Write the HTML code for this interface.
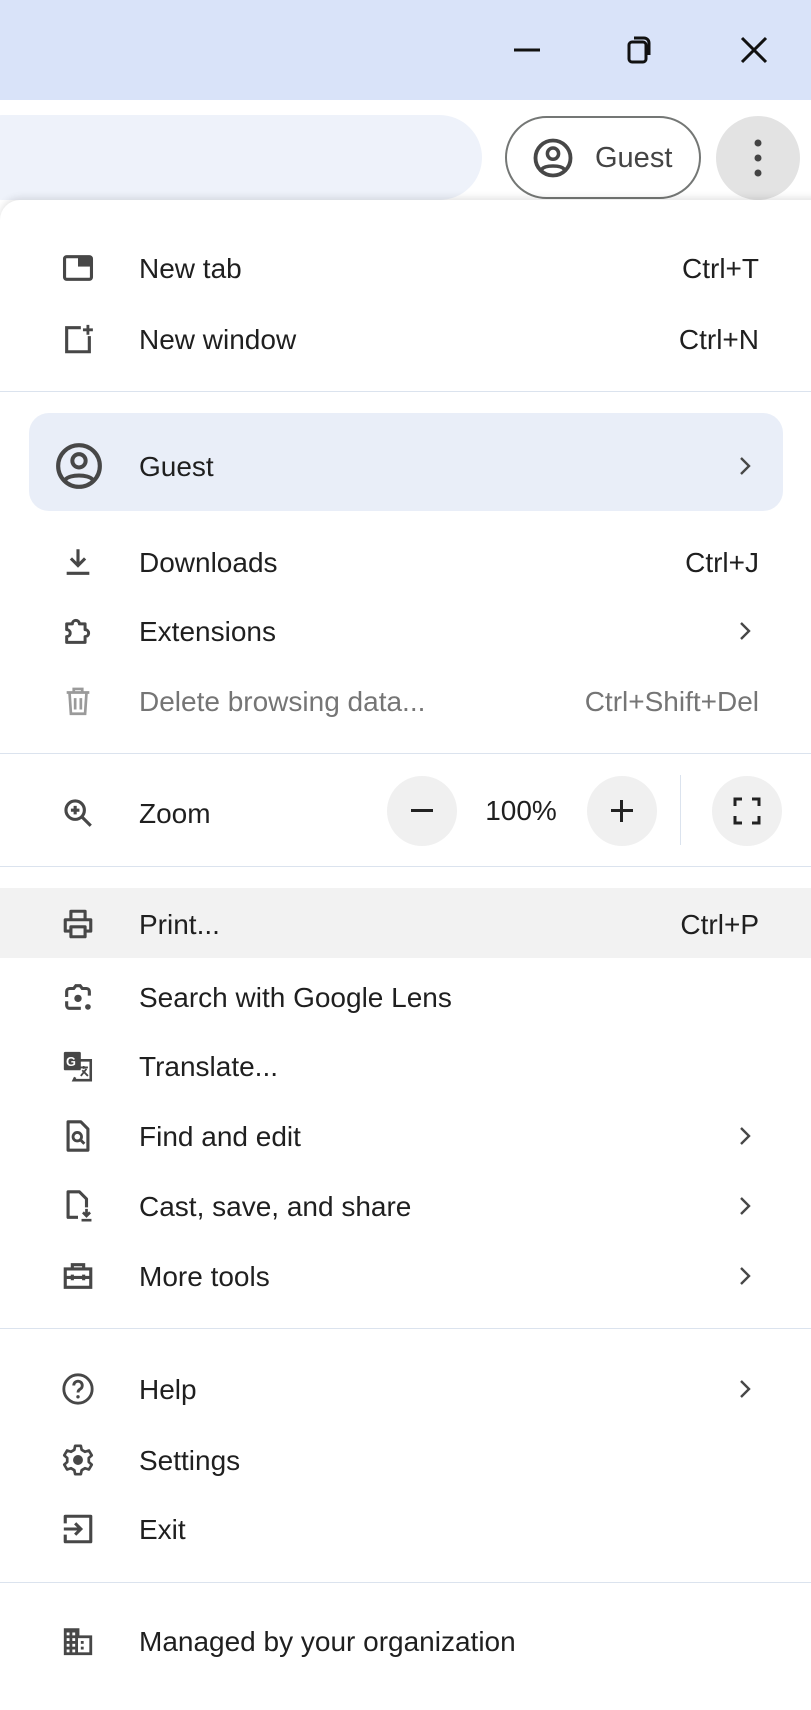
<!DOCTYPE html><html><head><style>
*{margin:0;padding:0;box-sizing:border-box}
body{width:811px;height:1704px;background:#fff;position:relative;overflow:hidden;font-family:"Liberation Sans",sans-serif;color:#1f1f1f}
.abs{position:absolute}
.row{position:absolute;left:0;width:811px;height:70px;line-height:72px;font-size:28px}
.row .t{position:absolute;left:139px;top:0}
.row .k{position:absolute;right:52px;top:0}
.row svg.i{position:absolute;left:61px;top:18px;width:34px;height:34px}
.row svg.c{position:absolute;left:734px;top:23px;width:22px;height:24px}
.div{position:absolute;left:0;width:811px;height:1px;background:#dbe3ee}
</style></head><body>
<div class="abs" style="left:0;top:0;width:811px;height:100px;background:#d9e3f9"></div>
<svg class="abs" style="left:500px;top:28px" width="290" height="44" viewBox="0 0 290 44">
<path d="M14 22h26" stroke="#111" stroke-width="3"/>
<rect x="129" y="14" width="17" height="20" rx="3" fill="none" stroke="#111" stroke-width="3"/>
<path d="M134 10h10a5 5 0 0 1 5 5v12" fill="none" stroke="#111" stroke-width="3"/>
<path d="M242 10l24 24M266 10l-24 24" stroke="#111" stroke-width="3"/>
</svg>
<div class="abs" style="left:0;top:100px;width:811px;height:110px;background:#fff;border-top-right-radius:20px"></div>
<div class="abs" style="left:-40px;top:115px;width:522px;height:85px;background:#eef2fa;border-radius:43px"></div>
<div class="abs" style="left:505px;top:116px;width:196px;height:83px;border:2px solid #747775;border-radius:42px;background:#fff"></div>
<svg class="abs" style="left:532px;top:137px" width="42" height="42" viewBox="0 0 24 24"><circle cx="12" cy="12" r="10" fill="none" stroke="#474747" stroke-width="2.2"/><circle cx="12" cy="9.5" r="3.2" fill="none" stroke="#474747" stroke-width="2"/><path d="M5.5 18.5c2-2.6 11-2.6 13 0" fill="none" stroke="#474747" stroke-width="2"/></svg>
<div class="abs" style="left:595px;top:140px;font-size:29px;line-height:36px;color:#444">Guest</div>
<div class="abs" style="left:716px;top:116px;width:84px;height:84px;border-radius:50%;background:#e3e3e3"></div>
<svg class="abs" style="left:748px;top:136px" width="20" height="44"><circle cx="10" cy="7" r="3.5" fill="#444"/><circle cx="10" cy="22" r="3.5" fill="#444"/><circle cx="10" cy="37" r="3.5" fill="#444"/></svg>
<div class="abs" style="left:0;top:200px;width:830px;height:1510px;background:#fff;border-top-left-radius:20px;box-shadow:0 -2px 8px rgba(0,0,0,.12)"></div>

<div class="row" style="top:233px"><svg class="i" viewBox="0 0 24 24"><rect x="2.5" y="4" width="19" height="16" rx="1.5" fill="none" stroke="#474747" stroke-width="2.2"/><rect x="12" y="4" width="9.5" height="7" fill="#474747"/></svg><span class="t">New tab</span><span class="k">Ctrl+T</span></div>
<div class="row" style="top:304px"><svg class="i" viewBox="0 0 24 24"><path d="M14 4H4v17h16V10" fill="none" stroke="#474747" stroke-width="2.2"/><path d="M19 2v7M15.5 5.5h7" stroke="#474747" stroke-width="2"/></svg><span class="t">New window</span><span class="k">Ctrl+N</span></div>
<div class="div" style="top:391px"></div>
<div class="abs" style="left:29px;top:413px;width:754px;height:98px;background:#e9eef8;border-radius:20px"></div>
<div class="row" style="top:431px"><svg class="i" style="left:54px;top:10px;width:50px;height:50px" viewBox="0 0 24 24"><circle cx="12" cy="12" r="10" fill="none" stroke="#474747" stroke-width="2"/><circle cx="12" cy="9.5" r="3.2" fill="none" stroke="#474747" stroke-width="1.9"/><path d="M5.5 18.5c2-2.6 11-2.6 13 0" fill="none" stroke="#474747" stroke-width="1.9"/></svg><span class="t">Guest</span><svg class="c" viewBox="0 0 22 24"><path d="M7 4l8 8-8 8" fill="none" stroke="#474747" stroke-width="2.4"/></svg></div>
<div class="row" style="top:527px"><svg class="i" viewBox="0 0 24 24"><path d="M12 3v11M7 9.5l5 5 5-5M4 20h16" fill="none" stroke="#474747" stroke-width="2.2"/></svg><span class="t">Downloads</span><span class="k">Ctrl+J</span></div>
<div class="row" style="top:596px"><svg class="i" viewBox="0 0 24 24"><path d="M4 7h4a2.5 2.5 0 0 1 5 0h4v4a2.5 2.5 0 0 1 0 5v4H4v-4a2.5 2.5 0 0 0 0-5z" fill="none" stroke="#474747" stroke-width="2.1" stroke-linejoin="round"/></svg><span class="t">Extensions</span><svg class="c" viewBox="0 0 22 24"><path d="M7 4l8 8-8 8" fill="none" stroke="#474747" stroke-width="2.4"/></svg></div>
<div class="row" style="top:666px;color:#757575"><svg class="i" viewBox="0 0 24 24"><path d="M4 6h16M9 6V3.5h6V6M6 6l1 15h10l1-15M10 10v8M14 10v8" fill="none" stroke="#9a9a9a" stroke-width="1.9"/></svg><span class="t">Delete browsing data...</span><span class="k">Ctrl+Shift+Del</span></div>
<div class="div" style="top:753px"></div>
<div class="row" style="top:778px"><svg class="i" viewBox="0 0 24 24"><circle cx="10" cy="10" r="6.5" fill="none" stroke="#474747" stroke-width="2.2"/><path d="M15 15l6 6M10 7v6M7 10h6" stroke="#474747" stroke-width="2.2"/></svg><span class="t">Zoom</span></div>
<div class="abs" style="left:387px;top:776px;width:70px;height:70px;border-radius:50%;background:#f0f0f0"></div>
<div class="abs" style="left:411px;top:809px;width:22px;height:3px;background:#222"></div>
<div class="abs" style="left:470px;top:776px;width:102px;line-height:70px;text-align:center;font-size:28px">100%</div>
<div class="abs" style="left:587px;top:776px;width:70px;height:70px;border-radius:50%;background:#f0f0f0"></div>
<div class="abs" style="left:611px;top:809px;width:22px;height:3px;background:#222"></div>
<div class="abs" style="left:620px;top:800px;width:3px;height:22px;background:#222"></div>
<div class="abs" style="left:680px;top:775px;width:1px;height:70px;background:#dbe3ee"></div>
<div class="abs" style="left:712px;top:776px;width:70px;height:70px;border-radius:50%;background:#f0f0f0"></div>
<svg class="abs" style="left:733px;top:797px" width="28" height="28" viewBox="0 0 28 28"><path d="M2 9V2h7M19 2h7v7M26 19v7h-7M9 26H2v-7" fill="none" stroke="#222" stroke-width="3"/></svg>
<div class="div" style="top:866px"></div>
<div class="abs" style="left:0;top:888px;width:811px;height:70px;background:#f2f2f2"></div>
<div class="row" style="top:889px"><svg class="i" viewBox="0 0 24 24"><path d="M7 8V3h10v5M7 17H3V9h18v8h-4M7 14h10v7H7z" fill="none" stroke="#474747" stroke-width="2.2" stroke-linejoin="round"/></svg><span class="t">Print...</span><span class="k">Ctrl+P</span></div>
<div class="row" style="top:962px"><svg class="i" viewBox="0 0 24 24"><path d="M4 12V8a2 2 0 0 1 2-2h3l1.5-2h3L15 6h3a2 2 0 0 1 2 2v3M4 15v3a2 2 0 0 0 2 2h8" fill="none" stroke="#474747" stroke-width="2.2"/><circle cx="12" cy="13" r="2.6" fill="#474747"/><circle cx="19" cy="19" r="2" fill="#474747"/></svg><span class="t">Search with Google Lens</span></div>
<div class="row" style="top:1031px"><svg class="i" viewBox="0 0 24 24"><rect x="2" y="2" width="12" height="13" rx="1" fill="#474747"/><path d="M10 8h11v14H9l1-2" fill="none" stroke="#474747" stroke-width="1.8"/><text x="3.5" y="12" font-size="9" font-family="Liberation Sans" font-weight="bold" fill="#fff">G</text><path d="M13 13h6M16 12v2M14 19l4-5M15 15l4 4" stroke="#474747" stroke-width="1.3"/></svg><span class="t">Translate...</span></div>
<div class="row" style="top:1101px"><svg class="i" viewBox="0 0 24 24"><path d="M5 2h9l5 5v15H5z" fill="none" stroke="#474747" stroke-width="2.2" stroke-linejoin="round"/><circle cx="11.5" cy="12.5" r="3" fill="none" stroke="#474747" stroke-width="2"/><path d="M13.5 14.5l3 3" stroke="#474747" stroke-width="2"/></svg><span class="t">Find and edit</span><svg class="c" viewBox="0 0 22 24"><path d="M7 4l8 8-8 8" fill="none" stroke="#474747" stroke-width="2.4"/></svg></div>
<div class="row" style="top:1171px"><svg class="i" viewBox="0 0 24 24"><path d="M12 20H5V2h8l5 5v6" fill="none" stroke="#474747" stroke-width="2.2" stroke-linejoin="round"/><path d="M18 14v5M15.5 16.5l2.5 2.5 2.5-2.5M14.5 22h7" fill="none" stroke="#474747" stroke-width="1.9"/></svg><span class="t">Cast, save, and share</span><svg class="c" viewBox="0 0 22 24"><path d="M7 4l8 8-8 8" fill="none" stroke="#474747" stroke-width="2.4"/></svg></div>
<div class="row" style="top:1241px"><svg class="i" viewBox="0 0 24 24"><path d="M8 7V4h8v3M3 7h18v13H3zM3 13h18M8 11v4M16 11v4" fill="none" stroke="#474747" stroke-width="2.2"/></svg><span class="t">More tools</span><svg class="c" viewBox="0 0 22 24"><path d="M7 4l8 8-8 8" fill="none" stroke="#474747" stroke-width="2.4"/></svg></div>
<div class="div" style="top:1328px"></div>
<div class="row" style="top:1354px"><svg class="i" viewBox="0 0 24 24"><circle cx="12" cy="12" r="10" fill="none" stroke="#474747" stroke-width="2"/><path d="M9 9.5a3 3 0 1 1 4.5 2.6c-1 .6-1.5 1.2-1.5 2.4" fill="none" stroke="#474747" stroke-width="2"/><circle cx="12" cy="17.5" r="1.2" fill="#474747"/></svg><span class="t">Help</span><svg class="c" viewBox="0 0 22 24"><path d="M7 4l8 8-8 8" fill="none" stroke="#474747" stroke-width="2.4"/></svg></div>
<div class="row" style="top:1425px"><svg class="i" viewBox="0 0 24 24"><path d="M10 2h4l.6 2.8 2.4 1.4 2.7-.9 2 3.4-2.1 1.9v2.8l2.1 1.9-2 3.4-2.7-.9-2.4 1.4L14 22h-4l-.6-2.8-2.4-1.4-2.7.9-2-3.4 2.1-1.9v-2.8L2.3 8.7l2-3.4 2.7.9 2.4-1.4z" fill="none" stroke="#474747" stroke-width="1.9" stroke-linejoin="round"/><circle cx="12" cy="12" r="3.5" fill="#474747"/></svg><span class="t">Settings</span></div>
<div class="row" style="top:1494px"><svg class="i" viewBox="0 0 24 24"><path d="M3 8V3h18v18H3v-5" fill="none" stroke="#474747" stroke-width="2.2" stroke-linejoin="round"/><path d="M2 12h12M10 8l4 4-4 4" fill="none" stroke="#474747" stroke-width="2.2"/></svg><span class="t">Exit</span></div>
<div class="div" style="top:1582px"></div>
<div class="row" style="top:1606px"><svg class="i" viewBox="0 0 24 24"><path d="M2 3h11v5h9v14H2z" fill="#474747"/><g fill="#fff"><rect x="4" y="6" width="2" height="2"/><rect x="8" y="6" width="2" height="2"/><rect x="4" y="10" width="2" height="2"/><rect x="8" y="10" width="2" height="2"/><rect x="4" y="14" width="2" height="2"/><rect x="8" y="14" width="2" height="2"/><rect x="4" y="18" width="2" height="2"/><rect x="8" y="18" width="2" height="2"/><rect x="12" y="10" width="8" height="10"/></g><g fill="#474747"><rect x="14" y="12" width="2" height="2"/><rect x="14" y="16" width="2" height="2"/></g></svg><span class="t">Managed by your organization</span></div>
</body></html>
